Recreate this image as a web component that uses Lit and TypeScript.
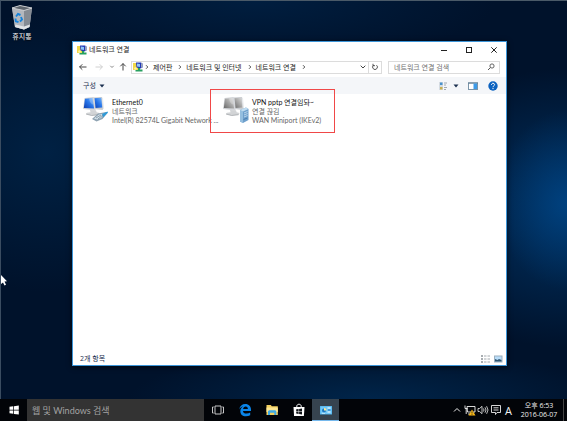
import { LitElement, html, css, svg } from "lit";
import { customElement } from "lit/decorators.js";

const networkIcon = html`<svg class="i10" viewBox="0 0 10 10" aria-hidden="true">
  <rect x="0" y="1" width="6" height="7" fill="#f0d848" />
  <path d="M3 .5h5l1.500 1v4l-2 1-4-1z" fill="#2238b8" />
  <path d="M4 1.500l3 .5v3l-3-.5z" fill="#8cc4f8" />
  <path d="M8 1l1.500.6v3.600L8 6z" fill="#9aa4b8" />
  <path d="M5 6h2v1.500h2.500V9.500h-7V8H5z" fill="#28a060" />
  <circle cx="2.500" cy="6.500" r="1.300" fill="#fff3a0" />
</svg>`;

const chevron = html`<svg class="chev" viewBox="0 0 4 6" aria-hidden="true">
  <path d="M1 1.200L2.800 3 1 4.800" fill="none" stroke="#555" stroke-width="1" />
</svg>`;

const downTriangle = html`<svg class="tri" viewBox="0 0 6 4" aria-hidden="true">
  <path d="M.5.5h5L3 3.500z" fill="#1c3050" />
</svg>`;

const ethernetBadge = svg`
  <path d="M9 23l6-5.500 8-1.500 1.500 1-5 6-6 2.500z" fill="#8fa3b2" />
  <path d="M11 22.500l5-4 6-1-4 4.500-4 1.500z" fill="#d5e2ea" />
  <path d="M19 18l5.500-2.500.5 1-5 5z" fill="#2e9ad8" />
  <path d="M13 22l5-3M15 23l5-4" stroke="#6e8492" stroke-width=".7" />`;

const serverBadge = svg`
  <path d="M17 14l6-2.500 2.500 1.500v11L20 27l-3-1.500z" fill="#6fa0cc" />
  <path d="M17 14l3 1.500V27l-3-1.500z" fill="#94bedf" />
  <path d="M17 14l6-2.500 2.500 1.500-5.500 2.500z" fill="#c0dcf0" />
  <path d="M21 17l3.500-1.500M21 19l3.500-1.500M21 21l3.500-1.500" stroke="#d8ebf8" stroke-width=".7" />
  <path d="M20.500 23.500l4-1.500" stroke="#4a7eb0" stroke-width="1" />`;

const computers = (online: boolean) => {
  const id = online ? "screen-on" : "screen-off";
  return html`<svg class="conn-icon" viewBox="0 0 26 28" aria-hidden="true">
    <defs>
      <linearGradient id=${id} x1="0" y1="1" x2="1" y2="0">
        <stop offset="0" stop-color=${online ? "#0c3cae" : "#686868"} />
        <stop offset=".5" stop-color=${online ? "#2674e8" : "#a4a4a4"} />
        <stop offset="1" stop-color=${online ? "#78baff" : "#dcdcdc"} />
      </linearGradient>
    </defs>
    <path d="M10 1.500l9-.5 1.500 11.500-1 1.500-8.500-1z" fill="#c9ccd0" />
    <path d="M11 2.300l7.300-.5 1 9.700-7.300.5z" fill="url(#${id})" />
    <path d="M18.800 1.500l1.200.5 1 10-1 1z" fill="#e8eaec" />
    <path d="M1.500 2L10 1l1.500 1 1.200 11.500-1 1L0 13z" fill="#d4d6da" />
    <path d="M2 2.800l7.500-.8 1.600 10.600L.8 12z" fill="url(#${id})" />
    <path d="M6 2.400l3.500-.4 1 6.500c-2 0-4-2-4.500-6z" fill="#fff" opacity=".25" />
    <path d="M7 14l6 .3.600 2 3 .7-1 1.700-7 .8L3 18l1-1.200 3.500-.6z" fill="#d2d4d6" />
    <path d="M3 18l5.600 1.500 7-.8" fill="none" stroke="#9a9da2" stroke-width=".7" />
    ${online ? ethernetBadge : serverBadge}
  </svg>`;
};

const crumbs = ["제어판", "네트워크 및 인터넷", "네트워크 연결"];

const connections = [
  { name: "Ethernet0", status: "네트워크", device: "Intel(R) 82574L Gigabit Network ...", online: true, marked: false },
  { name: "VPN pptp 연결임돠~", status: "연결 끊김", device: "WAN Miniport (IKEv2)", online: false, marked: true },
];

@customElement("connections-window")
export class ConnectionsWindow extends LitElement {
  static styles = css`
    :host {
      display: flex;
      flex-direction: column;
      box-sizing: border-box;
      background: #fff;
      border: 1px solid #3c95d8;
      color: #222;
      font-size: 7px;
      line-height: 9px;
    }
    svg { display: block; flex: none; }
    button, input { font: inherit; color: inherit; background: none; border: 0; padding: 0; margin: 0; }
    button { display: flex; align-items: center; justify-content: center; }
    a { color: inherit; text-decoration: none; }
    h1 { font: inherit; margin: 0; flex: 1; }
    .i10 { width: 10px; height: 10px; }
    .i12 { width: 12px; height: 10px; }
    .chev { width: 4px; height: 6px; }
    .tri { width: 6px; height: 4px; }
    .title { display: flex; align-items: center; gap: 2px; padding-left: 4px; height: 15px; }
    .captions { display: flex; }
    .captions button { width: 25px; height: 15px; }
    .nav { display: flex; align-items: center; height: 20px; padding: 0 6px 0 4px; }
    .nav > button { width: 12px; height: 12px; }
    .nav > .fwd { margin-left: 4px; }
    .nav > .recent { margin-left: 2px; width: 10px; }
    .address {
      flex: 1;
      display: flex;
      align-items: center;
      box-sizing: border-box;
      height: 13px;
      margin-left: 2px;
      border: 1px solid #dcdcdc;
    }
    .crumbs { flex: 1; display: flex; align-items: center; padding-left: 1px; white-space: nowrap; }
    .crumbs .i10 { margin-right: 2px; }
    .crumbs a { margin: 0 6px 0 4px; }
    .address button { width: 11px; height: 11px; }
    .address .refresh { border-left: 1px solid #dcdcdc; width: 13px; }
    .search {
      display: flex;
      align-items: center;
      box-sizing: border-box;
      width: 112px;
      height: 13px;
      margin-left: 6px;
      padding: 0 3px 0 5px;
      border: 1px solid #dcdcdc;
    }
    .search input { flex: 1; min-width: 0; height: 11px; outline: none; }
    .search input::placeholder { color: #707070; opacity: 1; }
    .tools {
      display: flex;
      align-items: center;
      gap: 9px;
      height: 17px;
      padding: 0 7px 0 10px;
      background: #f4f6f9;
      color: #1c3050;
    }
    .organize { gap: 3px; }
    .spacer { flex: 1; }
    .view { gap: 5px; }
    .list {
      flex: 1;
      display: grid;
      grid-template-columns: repeat(auto-fill, 140px);
      align-content: start;
      list-style: none;
      margin: 0;
      padding: 2px 0 0 10px;
      font-family: Lato, "Noto Sans CJK KR", sans-serif;
    }
    .item { position: relative; display: flex; gap: 3px; height: 32px; white-space: nowrap; }
    .conn-icon { width: 26px; height: 28px; }
    .item p { margin: 0; color: #666; }
    .item .name { color: #111; }
    .item .text { padding-top: 2px; }
    .mark { position: absolute; left: -13px; top: -7px; width: 123px; height: 42px; border: 1px solid #f04848; }
    .status { display: flex; align-items: center; gap: 2px; height: 13px; padding: 0 3px 0 7px; color: #1c3050; }
  `;

  render() {
    return html`
      <header class="title">
        ${networkIcon}
        <h1>네트워크 연결</h1>
        <div class="captions">
          <button aria-label="최소화">
            <svg class="i10" viewBox="0 0 10 10"><path d="M2 5.500h6" stroke="#222" /></svg>
          </button>
          <button aria-label="최대화">
            <svg class="i10" viewBox="0 0 10 10"><rect x="2.500" y="2.500" width="5" height="5" fill="none" stroke="#222" /></svg>
          </button>
          <button aria-label="닫기">
            <svg class="i10" viewBox="0 0 10 10"><path d="M2.300 2.300l5.400 5.400M7.700 2.300L2.300 7.700" stroke="#222" /></svg>
          </button>
        </div>
      </header>
      <nav class="nav">
        <button aria-label="뒤로">
          <svg class="i10" viewBox="0 0 10 10"><path d="M8.500 5h-7M4.300 2.300L1.600 5l2.700 2.700" fill="none" stroke="#444" /></svg>
        </button>
        <button class="fwd" aria-label="앞으로">
          <svg class="i10" viewBox="0 0 10 10"><path d="M1.500 5h7M5.700 2.300L8.400 5 5.700 7.700" fill="none" stroke="#d0d0d0" /></svg>
        </button>
        <button class="recent" aria-label="최근 위치">
          <svg class="tri" viewBox="0 0 6 4"><path d="M1.300.8L3 2.500 4.700.8" fill="none" stroke="#888" /></svg>
        </button>
        <button aria-label="위로">
          <svg class="i10" viewBox="0 0 10 10"><path d="M5 8.500v-7M2.300 4.300L5 1.600l2.700 2.700" fill="none" stroke="#444" /></svg>
        </button>
        <div class="address">
          <div class="crumbs">
            ${networkIcon} ${chevron} ${crumbs.map((c) => html`<a href="#">${c}</a>${chevron}`)}
          </div>
          <button aria-label="이전 위치">
            <svg class="tri" viewBox="0 0 6 4"><path d="M.7.7L3 3 5.300.7" fill="none" stroke="#444" /></svg>
          </button>
          <button class="refresh" aria-label="새로 고침">
            <svg class="i10" viewBox="0 0 10 10">
              <path d="M6.500 3.200A2.400 2.400 0 1 1 3.500 3.200M3 1.800v1.900h2" fill="none" stroke="#444" stroke-width=".9" />
            </svg>
          </button>
        </div>
        <label class="search">
          <input type="text" placeholder="네트워크 연결 검색" aria-label="네트워크 연결 검색" />
          <svg class="i10" viewBox="0 0 10 10">
            <circle cx="6" cy="4" r="2.100" fill="none" stroke="#555" stroke-width=".9" />
            <path d="M4.500 5.500L2 8" stroke="#555" />
          </svg>
        </label>
      </nav>
      <div class="tools">
        <button class="organize">구성 ${downTriangle}</button>
        <div class="spacer"></div>
        <button class="view" aria-label="보기 변경">
          <svg class="i10" viewBox="0 0 10 10">
            <rect x="1" y="1" width="4" height="8" fill="#d4dbe2" />
            <rect x="2" y="1.500" width="2.500" height="2.500" fill="#4a92cc" />
            <rect x="2" y="6" width="2.500" height="2.500" fill="#c8b050" />
            <path d="M6 2h3M6 4h2M6 6.500h3M6 8.500h2" stroke="#8a95a0" stroke-width=".8" />
          </svg>
          ${downTriangle}
        </button>
        <button aria-label="미리 보기 창">
          <svg class="i10" viewBox="0 0 10 10">
            <rect x=".5" y="2" width="9" height="6.500" fill="#fff" stroke="#7a94a8" />
            <path d="M0 2h10" stroke="#5a7890" />
            <rect x="5.500" y="2.500" width="3.500" height="5.500" fill="#3c9ae8" />
          </svg>
        </button>
        <button aria-label="도움말">
          <svg class="i12" viewBox="0 0 12 10">
            <circle cx="6" cy="5" r="4.700" fill="#0b62c0" />
            <path d="M4.500 3.800C4.500 1.700 7.600 1.800 7.600 3.700 7.600 4.800 6 4.800 6 6.200" fill="none" stroke="#fff" />
            <circle cx="6" cy="7.600" r=".7" fill="#fff" />
          </svg>
        </button>
      </div>
      <ul class="list">
        ${connections.map(
          (c) => html`<li class="item">
            ${computers(c.online)}
            <div class="text">
              <p class="name">${c.name}</p>
              <p>${c.status}</p>
              <p>${c.device}</p>
            </div>
            ${c.marked ? html`<div class="mark"></div>` : ""}
          </li>`,
        )}
      </ul>
      <footer class="status">
        <span>2개 항목</span>
        <div class="spacer"></div>
        <button aria-label="자세히">
          <svg class="i12" viewBox="0 0 12 10">
            <path d="M2 2h2M2 5h2M2 8h2" stroke="#8c9298" stroke-width="1.600" />
            <path d="M5 2h2.500M8.500 2H11M5 5h2.500M8.500 5H11M5 8h2.500M8.500 8H11" stroke="#9aa0a6" stroke-width=".9" />
          </svg>
        </button>
        <button aria-label="큰 아이콘">
          <svg class="i10" viewBox="0 0 10 10">
            <rect x="1.500" y="2" width="7.500" height="6" fill="#b8dcf8" stroke="#9cb0c0" />
            <path d="M2 7.500V5l2.500 1L6 5l2.500 1v1.500z" fill="#2c5470" />
          </svg>
        </button>
      </footer>
    `;
  }
}

@customElement("task-bar")
export class TaskBar extends LitElement {
  static styles = css`
    :host { display: flex; height: 22px; background: #020408; color: #f0f0f0; font-size: 7px; line-height: 9px; }
    svg { display: block; width: 14px; height: 14px; }
    button, input { font: inherit; color: inherit; background: none; border: 0; padding: 0; margin: 0; }
    button { display: flex; align-items: center; justify-content: center; }
    .app { width: 27px; height: 22px; box-sizing: border-box; }
    .active { background: #36434f; border-bottom: 1px solid #76b9ed; }
    .search {
      width: 177px;
      box-sizing: border-box;
      background: #333;
      padding: 0 5px;
      font-family: Lato, "Noto Sans CJK KR", sans-serif;
      font-size: 9px;
      outline: none;
    }
    .search::placeholder { color: #a2a2a2; opacity: 1; }
    .tray { display: flex; align-items: center; margin-left: auto; }
    .tray button { width: 13px; height: 22px; }
    .tray svg { width: 12px; height: 12px; }
    .tray .ime { font-size: 11px; }
    .tray .clock { width: 48px; text-align: center; }
    .tray .peek { width: 4px; box-sizing: border-box; border-left: 1px solid #444; }
  `;

  render() {
    return html`
      <button class="app" aria-label="시작">
        <svg viewBox="0 0 14 14">
          <path d="M2.500 3.800l3.800-.5v3.400H2.500zM7 3.200l4.800-.7v4.200H7zM2.500 7.400h3.800v3.400l-3.800-.5zM7 7.400h4.800v4.200L7 10.900z" fill="#fff" />
        </svg>
      </button>
      <input class="search" type="text" placeholder="웹 및 Windows 검색" aria-label="웹 및 Windows 검색" />
      <button class="app" aria-label="작업 보기">
        <svg viewBox="0 0 14 14">
          <path d="M4 3h6v8H4zM2.700 4H1.500v6h1.200M11.300 4h1.200v6h-1.200" fill="none" stroke="#ddd" stroke-width=".9" />
        </svg>
      </button>
      <button class="app" aria-label="Edge">
        <svg viewBox="0 0 14 14">
          <path d="M1.200 6.400C1.800 3 4.200 1 7.300 1c3.600 0 5.700 2.500 5.700 5.600v1.300H5c.1 1.800 1.500 2.700 3.500 2.700 1.500 0 2.700-.4 3.700-1v2.600c-1.200.7-2.700 1-4.300 1-3.500 0-5.600-2-5.600-5 0-2.100 1.100-3.800 2.900-4.700C3.500 3.800 2 4.900 1.200 6.400zM5.100 6h4.800c0-1.500-.8-2.400-2.200-2.400C6.300 3.600 5.300 4.600 5.100 6z" fill="#0a84e8" />
        </svg>
      </button>
      <button class="app" aria-label="파일 탐색기">
        <svg viewBox="0 0 14 14">
          <path d="M1.500 2h4.300l1 1.200h6V12H1.500z" fill="#f3cf5e" />
          <path d="M1.500 4.500h11.300V9H1.500z" fill="#fce793" />
          <path d="M3 12V8.300l1-1h6.300l1 1V12H9.300V9.800H5V12z" fill="#3fa9e4" />
        </svg>
      </button>
      <button class="app" aria-label="스토어">
        <svg viewBox="0 0 14 14">
          <path d="M4.800 4.500V3.200C4.800.6 9.200.6 9.200 3.200v1.300" fill="none" stroke="#fff" />
          <path d="M1.500 4h11l-.6 9H2.100z" fill="#fff" />
          <path d="M4.200 6.300l2.400-.3v2.200H4.200zM7.100 5.900l2.900-.4v2.700H7.100zM4.200 8.700h2.400v2.200l-2.400-.3zM7.100 8.700H10v2.700l-2.900-.4z" fill="#101418" />
        </svg>
      </button>
      <button class="app active" aria-label="네트워크 연결">
        <svg viewBox="0 0 14 14">
          <rect x="1" y="3" width="12" height="8.500" fill="#4aaee8" />
          <rect x="1.500" y="3.500" width="11" height="7.500" fill="#70c8f8" />
          <circle cx="5" cy="7.500" r="2" fill="#1c78c4" />
          <path d="M5 7.500V5a2.500 2.500 0 0 1 2.500 2.500z" fill="#fce793" />
          <path d="M8.500 5h3M8.500 9h3" stroke="#fff" />
          <path d="M9 7h2.500" stroke="#186cb8" />
          <path d="M3 10.300h3" stroke="#eaf8ff" stroke-width=".7" />
        </svg>
      </button>
      <div class="tray">
        <button aria-label="숨겨진 아이콘 표시">
          <svg viewBox="0 0 12 12"><path d="M3 7.500l3-3 3 3" fill="none" stroke="#eee" /></svg>
        </button>
        <button aria-label="네트워크">
          <svg viewBox="0 0 12 12">
            <path d="M1 1.500v3h2.500M3 2.500h8v5.500H3.500zM4 10h4M2.200 4.500V10" fill="none" stroke="#eee" stroke-width=".9" />
            <path d="M8 5.500l3.500 6h-7z" fill="#f8b818" />
            <path d="M8 7.500v2M8 10v.8" stroke="#222" stroke-width=".8" />
          </svg>
        </button>
        <button aria-label="볼륨">
          <svg viewBox="0 0 12 12">
            <path d="M1 4.500h1.500L5 2.300v7.400L2.500 7.500H1z" fill="none" stroke="#eee" stroke-width=".8" />
            <path d="M6.500 4.500q1 1.500 0 3M8 3.300q2 2.700 0 5.400M9.600 2.200q2.800 3.800 0 7.600" fill="none" stroke="#eee" stroke-width=".8" />
          </svg>
        </button>
        <button aria-label="알림 센터">
          <svg viewBox="0 0 12 12">
            <path d="M1.500 1.500h9v7H7L5.500 10.500V8.500h-4zM3.500 3.800h5M3.500 6h5" fill="none" stroke="#eee" stroke-width=".9" />
          </svg>
        </button>
        <button class="ime" aria-label="입력기">A</button>
        <time class="clock" datetime="2016-06-07T18:53">오후 6:53<br />2016-06-07</time>
        <button class="peek" aria-label="바탕 화면 보기"></button>
      </div>
    `;
  }
}

@customElement("app-root")
export class AppRoot extends LitElement {
  static styles = css`
    :host {
      display: flex;
      flex-direction: column;
      box-sizing: border-box;
      height: 100vh;
      padding-bottom: 4px;
      background: #fff;
      font-family: "Open Sans", "Noto Sans CJK KR", sans-serif;
    }
    .desktop {
      flex: 1;
      position: relative;
      overflow: hidden;
      box-sizing: border-box;
      border-top: 1px solid #4a5a68;
      border-left: 1px solid #3a4c60;
      background:
        radial-gradient(ellipse 70px 90px at 100% 50%, #00509a80, #00509a00),
        radial-gradient(ellipse 170px 140px at 100% 52%, #004686a0, #00468600),
        radial-gradient(ellipse 150px 140px at 8% 38%, #00305c80, #00305c00),
        radial-gradient(ellipse 240px 60px at 45% 0%, #002a5480, #002a5400),
        radial-gradient(ellipse 240px 50px at 65% 100%, #00305ca0, #00305c00),
        #00122b;
    }
    .bin {
      position: absolute;
      left: 3px;
      top: 4px;
      width: 36px;
      display: flex;
      flex-direction: column;
      align-items: center;
      gap: 2px;
      color: #fff;
      font-size: 7px;
      line-height: 9px;
      text-decoration: none;
      text-shadow: 0 1px 1px #000;
    }
    .bin svg { width: 22px; height: 25px; }
    .window { position: absolute; left: 71px; top: 40px; right: 60px; bottom: 33px; box-shadow: 0 1px 5px #000a; }
    .pointer { position: absolute; left: 0; top: 274px; width: 7px; height: 11px; }
  `;

  render() {
    return html`
      <main class="desktop">
        <a class="bin" href="#">
          <svg viewBox="0 0 22 25" aria-hidden="true">
            <path d="M1 3l8-2.500L21 3l-2.500 19L13 24.500 4 22z" fill="#a8adb4" />
            <path d="M1 3l12 2.500v19L4 22z" fill="#b4b8be" />
            <path d="M13 5.500L21 3l-2.500 19-5.500 2.500z" fill="#858b93" />
            <path d="M1 3l8-2.500L21 3l-8 2.500z" fill="#5e666e" stroke="#d2d5d8" stroke-width=".9" />
            <path d="M4.500 19.500l8.500 2 6-2-.5 2.500-5.500 2.500L4 22z" fill="#e0e3e6" />
            <path d="M5 11.500L7 9l2.500 1M10 12l1 2.500-2 2M7.500 17L4.800 16.300 4.500 13.500" fill="none" stroke="#1583dc" stroke-width="1.900" />
          </svg>
          휴지통
        </a>
        <connections-window class="window"></connections-window>
        <svg class="pointer" viewBox="0 0 7 11" aria-hidden="true">
          <path d="M0 0l6 6.300-2.500.2L5 9.700l-1.500.8L2 7.400 0 9z" fill="#fff" />
        </svg>
      </main>
      <task-bar></task-bar>
    `;
  }
}
